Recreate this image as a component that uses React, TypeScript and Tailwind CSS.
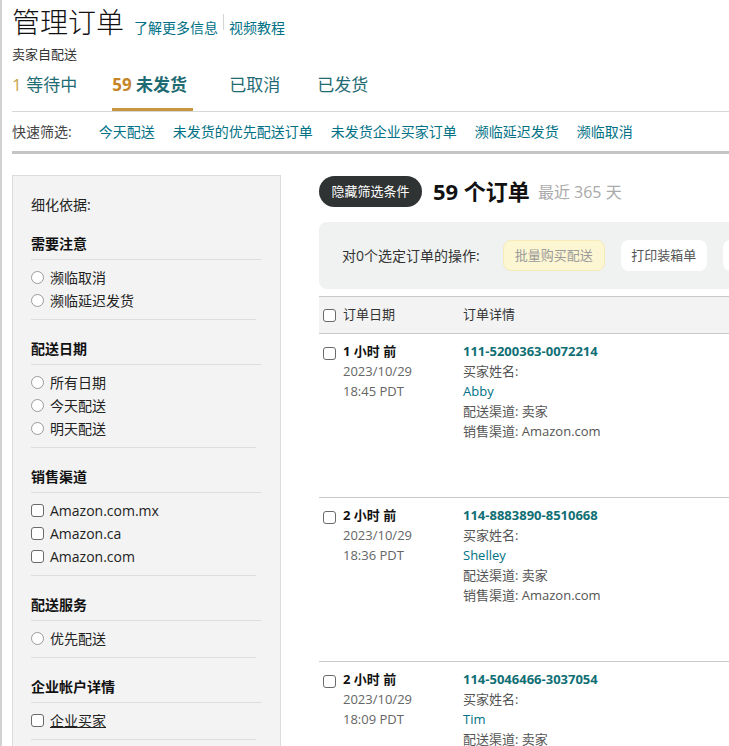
import React from 'react';

const font = {
  fontFamily: '"Open Sans", "Noto Sans CJK SC", sans-serif',
};

const quickFilters = [
  '今天配送',
  '未发货的优先配送订单',
  '未发货企业买家订单',
  '濒临延迟发货',
  '濒临取消',
];

const orders = [
  { ago: '1 小时 前', date: '2023/10/29', time: '18:45 PDT', id: '111-5200363-0072214', buyer: 'Abby' },
  { ago: '2 小时 前', date: '2023/10/29', time: '18:36 PDT', id: '114-8883890-8510668', buyer: 'Shelley' },
  { ago: '2 小时 前', date: '2023/10/29', time: '18:09 PDT', id: '114-5046466-3037054', buyer: 'Tim' },
];

type Section = {
  title: string;
  kind: 'radio' | 'check';
  items: string[];
};

const sections: Section[] = [
  { title: '需要注意', kind: 'radio', items: ['濒临取消', '濒临延迟发货'] },
  { title: '配送日期', kind: 'radio', items: ['所有日期', '今天配送', '明天配送'] },
  { title: '销售渠道', kind: 'check', items: ['Amazon.com.mx', 'Amazon.ca', 'Amazon.com'] },
  { title: '配送服务', kind: 'radio', items: ['优先配送'] },
  { title: '企业帐户详情', kind: 'check', items: ['企业买家'] },
];

function Radio() {
  return <span className="inline-block w-[13px] h-[13px] shrink-0 rounded-full border border-[#9a9a9a] bg-white" />;
}

function Checkbox() {
  return <span className="inline-block w-[13px] h-[13px] shrink-0 rounded-[3px] border border-[#6a6a6a] bg-white" />;
}

function Sidebar() {
  return (
    <aside className="w-[269px] shrink-0 bg-[#f3f3f3] border border-[#dcdcdc] pl-[18px] pr-[18px] pb-[20px]">
      <div className="mt-[19px] text-[14px] leading-[20px] text-[#222]">细化依据:</div>
      {sections.map((s) => (
        <div key={s.title}>
          <div className="mt-[19px] text-[14px] leading-[20px] font-bold text-[#111] pb-[5px] border-b border-[#dedede]">
            {s.title}
          </div>
          <div className="pt-[6px] pb-[7px] mr-[6px] border-b border-[#dedede]">
            {s.items.map((item) => (
              <div key={item} className="h-[23px] flex items-center gap-[6px] text-[14px] text-[#222]">
                {s.kind === 'radio' ? <Radio /> : <Checkbox />}
                <span className={item === '企业买家' ? 'underline' : ''}>{item}</span>
              </div>
            ))}
          </div>
        </div>
      ))}
    </aside>
  );
}

function OrderRow({ order }: { order: (typeof orders)[number] }) {
  return (
    <div className="h-[164px] border-b border-[#c9c9c9] pt-[7px] pl-[4px] flex text-[13px] leading-[20px]">
      <div className="w-[140px] flex gap-[7px]">
        <span className="mt-[4px]">
          <Checkbox />
        </span>
        <div>
          <div className="font-bold text-[#111]">{order.ago}</div>
          <div className="text-[#666]">{order.date}</div>
          <div className="text-[#666]">{order.time}</div>
        </div>
      </div>
      <div className="text-[#555]">
        <div className="font-bold text-[#0f6f75]">{order.id}</div>
        <div>买家姓名:</div>
        <div className="text-[#007185]">{order.buyer}</div>
        <div>配送渠道: 卖家</div>
        <div>销售渠道: Amazon.com</div>
      </div>
    </div>
  );
}

export default function App() {
  return (
    <div style={font} className="min-h-screen overflow-hidden bg-white border-l-2 border-[#d2d2d2] pl-[10px]">
      {/* header */}
      <div className="pt-[4px] flex items-baseline">
        <h1 className="text-[28px] leading-[36px] font-light text-[#111]">管理订单</h1>
        <a className="ml-[10px] text-[14px] text-[#007185]">了解更多信息</a>
        <span className="mx-[5px] inline-block w-px h-[16px] bg-[#d5d5d5] self-center" />
        <a className="text-[14px] text-[#007185]">视频教程</a>
      </div>
      <div className="mt-[5px] text-[13px] leading-[18px] text-[#333]">卖家自配送</div>

      {/* tabs */}
      <div className="mt-[10px] flex gap-[35px] border-b border-[#d8d8d8] text-[17px] leading-[24px]">
        <div className="pb-[11px] border-b-[3px] border-transparent text-[#1f6b73]">
          <span className="text-[#c9a44c]">1</span> 等待中
        </div>
        <div className="w-[81px] pb-[11px] border-b-[3px] border-[#c8963e] font-bold text-[#1f6b73]">
          <span className="text-[#c6852a]">59</span> 未发货
        </div>
        <div className="pb-[11px] border-b-[3px] border-transparent text-[#1f6b73] ml-[1px]">已取消</div>
        <div className="pb-[11px] border-b-[3px] border-transparent text-[#1f6b73] ml-[2px]">已发货</div>
      </div>

      {/* quick filters */}
      <div className="h-[39px] flex items-center text-[14px]">
        <span className="text-[#444] mr-[27px]">快速筛选:</span>
        <div className="flex gap-[18px] text-[#007185]">
          {quickFilters.map((f) => (
            <a key={f}>{f}</a>
          ))}
        </div>
      </div>
      <div className="h-[3px] bg-[#c4c4c4]" />

      {/* body */}
      <div className="mt-[21px] flex gap-[38px]">
        <Sidebar />

        <main className="w-[620px] shrink-0">
          <div className="flex items-center">
            <button className="h-[31px] w-[103px] rounded-full bg-[#303333] text-white text-[13px]">
              隐藏筛选条件
            </button>
            <span className="ml-[11px] text-[22px] font-bold text-[#111]">59 个订单</span>
            <span className="ml-[8px] text-[16px] text-[#aaa]">最近 365 天</span>
          </div>

          <div className="mt-[14px] h-[67px] rounded-[8px] bg-[#f0f2f2] flex items-center pl-[23px]">
            <span className="text-[14px] text-[#333]">对0个选定订单的操作:</span>
            <button className="ml-[23px] h-[31px] w-[102px] rounded-[8px] bg-[#fdf6d2] border border-[#f5eab8] text-[13px] text-[#9a9a9a]">
              批量购买配送
            </button>
            <button className="ml-[16px] h-[31px] w-[86px] rounded-[8px] bg-white text-[13px] text-[#555]">
              打印装箱单
            </button>
            <button className="ml-[16px] h-[31px] w-[90px] rounded-[8px] bg-white text-[13px] text-[#555] shrink-0">
              更多
            </button>
          </div>

          <div className="mt-[7px] h-[38px] bg-[#f3f3f3] border-t border-b border-[#c9c9c9] flex items-center pl-[4px] text-[13px] text-[#333]">
            <div className="w-[140px] flex items-center gap-[7px]">
              <Checkbox />
              <span>订单日期</span>
            </div>
            <span>订单详情</span>
          </div>

          {orders.map((o) => (
            <OrderRow key={o.id} order={o} />
          ))}
        </main>
      </div>
    </div>
  );
}
